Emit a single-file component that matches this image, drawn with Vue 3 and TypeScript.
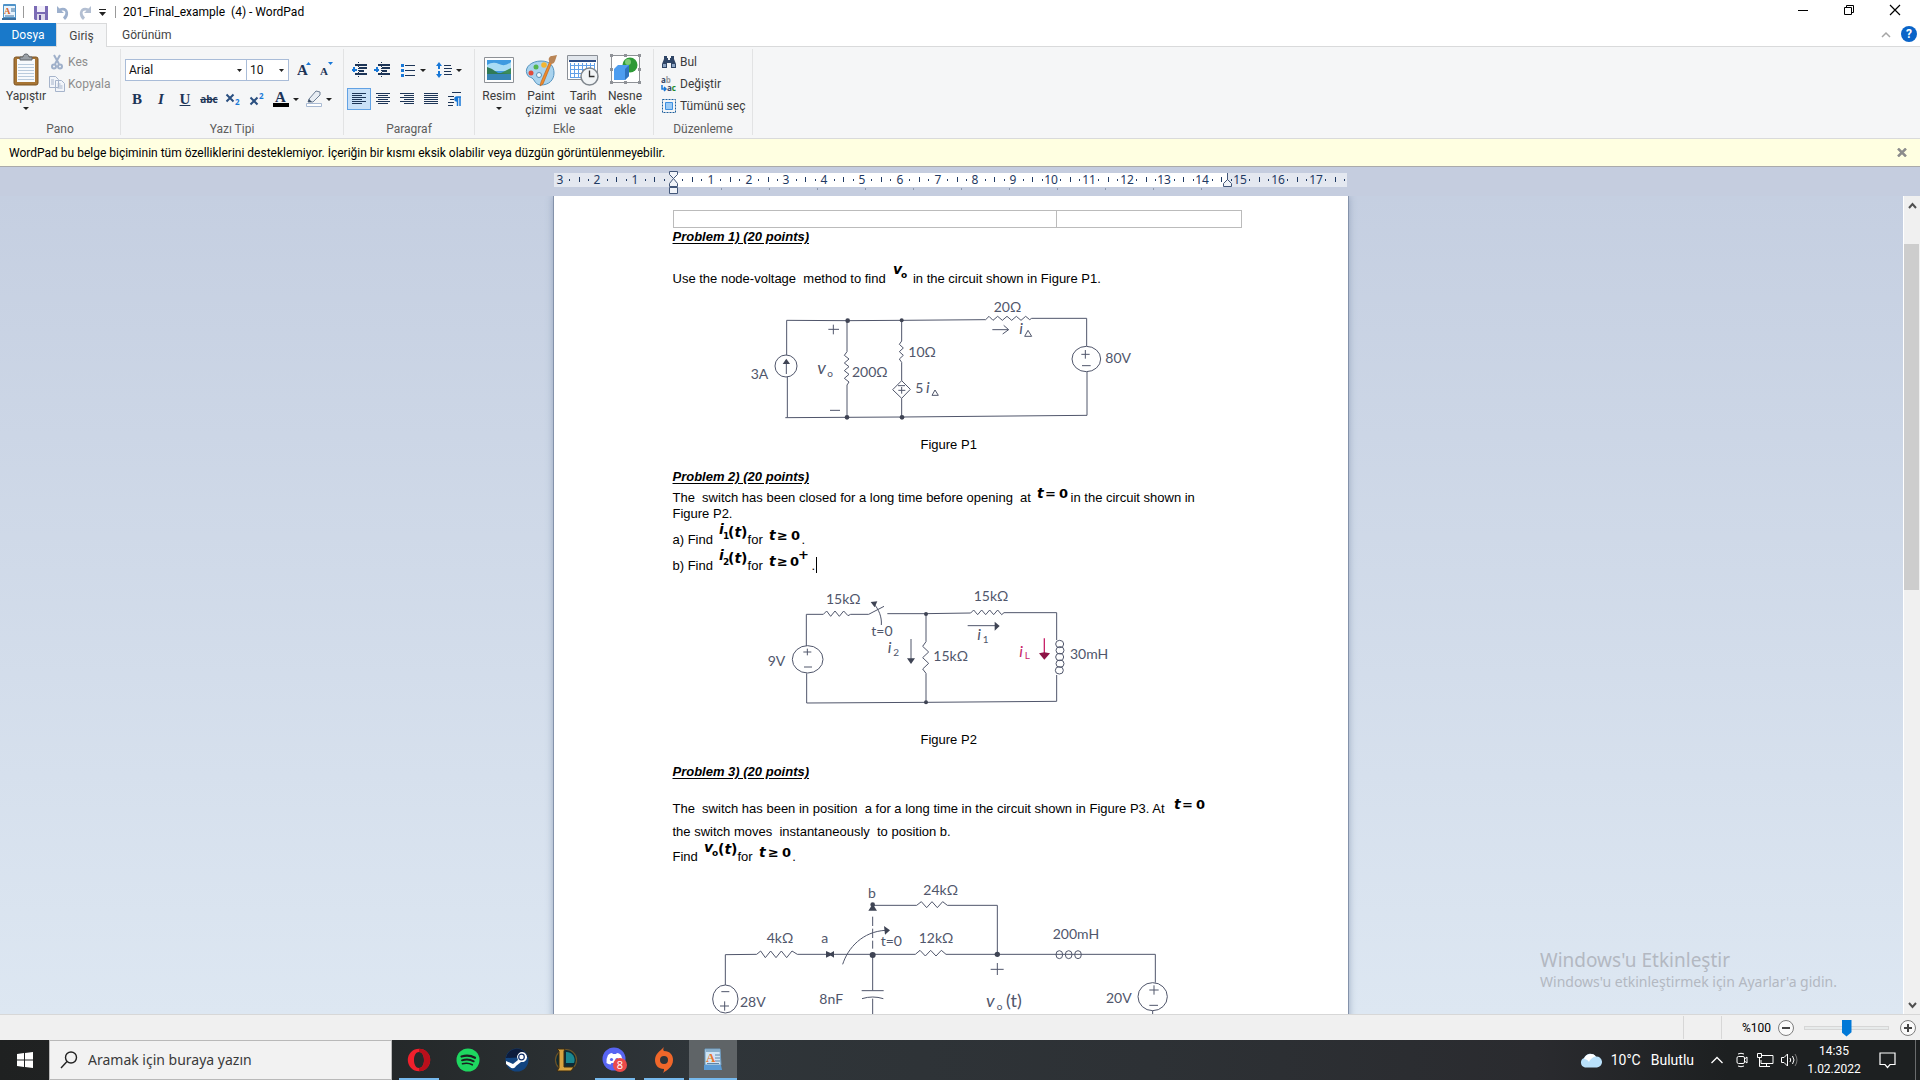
<script setup lang="ts">
import { ref } from 'vue'

const CM = 37.8
const ORIGIN = 119

interface Mark { x: number; label?: string; kind: 'num' | 'dot' | 'line' }
const marks: Mark[] = []
for (let q = -12; q <= 71; q++) {
  if (q === 0) continue
  const x = Math.round(ORIGIN + (q * CM) / 4)
  if (q % 4 === 0) marks.push({ x, label: String(Math.abs(q / 4)), kind: 'num' })
  else marks.push({ x, kind: q % 2 === 0 ? 'line' : 'dot' })
}
const tabStops = Array.from({ length: 11 }, (_, i) => ORIGIN + 48 * (i + 1))

const zoom = ref(50)
const font = ref('Arial')
const size = ref('10')
const search = ref('')
</script>

<template>
  <div class="app">
    <header class="titlebar">
      <svg class="ico" width="16" height="18" viewBox="0 0 16 18"><rect x="2" y="1" width="13" height="15" rx="1" fill="#4f93c9" /><rect x="3" y="3" width="11" height="11" fill="#e9f4fc" /><path d="M1 15h14v2H1z" fill="#3b6f9e" /><text x="3" y="11" class="wp-a">A</text><path d="M10 6h4M10 8h4M4 13h9" stroke="#3b6f9e" /></svg>
      <i class="tsep s1"></i>
      <button class="qb" aria-label="Kaydet"><svg width="16" height="16" viewBox="0 0 16 16"><path d="M1 1h14v14H2l-1-1z" fill="#7b6bb5" /><path d="M4 1h8v6H4z" fill="#f1eefa" /><path d="M4 9h8v6H4z" fill="#dcd8ea" /><path d="M6 10h2v5H6z" fill="#5d4e99" /></svg></button>
      <button class="qb" aria-label="Geri al"><svg width="16" height="16" viewBox="0 0 16 16"><path d="M2 1v7h7L6.500 5.800C10 4.500 12.500 8 8 12.500l2 2.500C16 10 13 0 4.500 3.500z" fill="#9db0cd" /></svg></button>
      <button class="qb" aria-label="Yinele"><svg width="16" height="16" viewBox="0 0 16 16"><path d="M14 1v7H7l2.500-2.200C6 4.500 3.500 8 8 12.500L6 15C0 10 3 0 11.500 3.500z" fill="#b3bfd2" /></svg></button>
      <button class="qb more" aria-label="Araç çubuğunu özelleştir"><svg width="8" height="8" viewBox="0 0 8 8"><path d="M0 0h7v1H0zM0 3h7L3.500 7z" fill="#222" /></svg></button>
      <i class="tsep s2"></i>
      <span class="title">201_Final_example&nbsp; (4) - WordPad</span>
      <div class="winbtns">
        <button aria-label="Simge durumuna küçült"><svg width="12" height="12"><path d="M1 6.500h10" stroke="#000" /></svg></button>
        <button aria-label="Geri yükle"><svg width="12" height="12" fill="none" stroke="#000"><path d="M1.500 3.500h7v7h-7zM3.500 3V1.500h7v7H9" /></svg></button>
        <button aria-label="Kapat"><svg width="12" height="12"><path d="M1 1l10 10M11 1L1 11" stroke="#000" stroke-width="1.200" /></svg></button>
      </div>
    </header>

    <nav class="tabs">
      <button class="tab file">Dosya</button>
      <button class="tab on">Giriş</button>
      <button class="tab view">Görünüm</button>
      <span class="grow"></span>
      <button class="tiny" aria-label="Şeridi küçült"><svg width="10" height="8"><path d="M1 6l4-4 4 4" fill="none" stroke="#a5a5a5" stroke-width="1.500" /></svg></button>
      <button class="tiny help" aria-label="Yardım">?</button>
    </nav>

    <section class="ribbon">
      <div class="group pano">
        <div class="body">
          <button class="big paste">
            <svg width="28" height="34" viewBox="0 0 28 34"><rect x="2" y="4" width="24" height="28" rx="2" fill="#a87534" stroke="#7d5422" /><path d="M5 6h18v23H5z" fill="#f7fafc" /><path d="M6 11.500h16M6 14.500h16M6 17.500h16M6 20.500h16M6 23.500h16M6 26.500h16" stroke="#b9cbdc" /><path d="M8 7V4h3c0-4 6-4 6 0h3v3z" fill="#9aa0a6" stroke="#5f656b" /></svg>
            <span>Yapıştır</span>
            <i class="caret"></i>
          </button>
          <div class="stack dim">
            <button><svg width="16" height="16" viewBox="0 0 16 16" fill="none" stroke="#9fb0ca" stroke-width="2"><path d="M5 1l5 9M11 1L6 10" /><circle cx="5" cy="12.500" r="2" /><circle cx="11" cy="12.500" r="2" /></svg><span>Kes</span></button>
            <button><svg width="16" height="16" viewBox="0 0 16 16" fill="#f2f5fa" stroke="#a6b4cb"><path d="M.5.5h6l3 3v8h-9zM6.500 4.500h6l3 3v8h-9z" /><path d="M2 4h3M2 6h3M2 8h3M8.500 8h3M8.500 10h5M8.500 12h5" /></svg><span>Kopyala</span></button>
          </div>
        </div>
        <div class="glabel">Pano</div>
      </div>

      <div class="group yazi">
        <div class="body rows">
          <div class="row">
            <select v-model="font" class="sel fontsel" aria-label="Yazı tipi"><option>Arial</option></select>
            <select v-model="size" class="sel sizesel" aria-label="Yazı tipi boyutu"><option>10</option></select>
            <button class="ib grow-a" aria-label="Büyüt"><svg width="16" height="20"><text x="0" y="15" class="glyph">A</text><path d="M9 5l2.500-3L14 5z" fill="#1878d8" /></svg></button>
            <button class="ib" aria-label="Küçült"><svg width="16" height="20"><text x="1" y="15" class="glyph sm">A</text><path d="M9 2h5l-2.500 3z" fill="#1878d8" /></svg></button>
          </div>
          <div class="row">
            <button class="ib" aria-label="Kalın"><b class="g">B</b></button>
            <button class="ib" aria-label="İtalik"><b class="g it">I</b></button>
            <button class="ib" aria-label="Altı çizili"><b class="g un">U</b></button>
            <button class="ib" aria-label="Üstü çizili"><b class="g st">abc</b></button>
            <button class="ib" aria-label="Alt simge"><svg width="16" height="18"><path d="M1.500 4.500l7 7M8.500 4.500l-7 7" stroke="#2a4f80" stroke-width="2" /><text x="10" y="15" class="num">2</text></svg></button>
            <button class="ib" aria-label="Üst simge"><svg width="16" height="18"><path d="M1.500 7.500l7 7M8.500 7.500l-7 7" stroke="#2a4f80" stroke-width="2" /><text x="10" y="9" class="num">2</text></svg></button>
            <button class="ib split" aria-label="Metin rengi"><svg width="16" height="18"><text x="2" y="12" class="glyph">A</text><path d="M0 13h16v4H0z" fill="#000" /></svg><i class="caret"></i></button>
            <button class="ib split" aria-label="Vurgu rengi"><svg width="16" height="18"><path d="M3 9l7-8 4 1v3l-7 7H2z" fill="#e8edf3" stroke="#6e7f95" /><path d="M2 12l1-3 3 3z" fill="#3d4f67" /><path d="M.5 13.500h15v3H.5z" fill="#fff" stroke="#a9bad3" /></svg><i class="caret"></i></button>
          </div>
        </div>
        <div class="glabel">Yazı Tipi</div>
      </div>

      <div class="group para">
        <div class="body rows">
          <div class="row">
            <button class="ib" aria-label="Girintiyi azalt"><svg width="16" height="16" stroke="#1d3557" stroke-width="2" class="cr"><path d="M4 3h12M8 6h8M8 9h5M4 12h12" /><path d="M7.500 0v16" stroke-width="1" stroke-dasharray="1 1" /><path d="M1 7.500h5M3 5v5" stroke="#1878d8" /></svg></button>
            <button class="ib n22" aria-label="Girintiyi artır"><svg width="16" height="16" stroke="#1d3557" stroke-width="2" class="cr"><path d="M4 3h12M8 6h8M8 9h5M4 12h12" /><path d="M7.500 0v16" stroke-width="1" stroke-dasharray="1 1" /><path d="M0 7.500h5M3 5v5" stroke="#1878d8" /></svg></button>
            <button class="ib split lst" aria-label="Liste"><svg width="16" height="16" class="cr"><path d="M5 3.500h10M5 8.500h10M5 13.500h10" stroke="#1d3557" /><path d="M1 2h3v3H1zM1 7h3v3H1zM1 12h3v3H1z" fill="#1878d8" /></svg><i class="caret"></i></button>
            <button class="ib split spc" aria-label="Satır aralığı"><svg width="16" height="16"><path d="M8 3.500h7M8 6.500h8M8 9.500h7M8 12.500h8" stroke="#1d3557" /><path d="M3 0l3 4H4v3H2V4H0zM3 16l3-4H4V9H2v3H0z" fill="#1878d8" /></svg><i class="caret"></i></button>
          </div>
          <div class="row">
            <button class="ib sel-on" aria-label="Sola hizala"><svg width="14" height="12" stroke="#1d3557"><path d="M0 .5h14M0 2.500h10M0 4.500h14M0 6.500h10M0 8.500h14M0 10.500h10" /></svg></button>
            <button class="ib" aria-label="Ortala"><svg width="14" height="12" stroke="#1d3557"><path d="M0 .5h14M2 2.500h10M0 4.500h14M2 6.500h10M0 8.500h14M2 10.500h10" /></svg></button>
            <button class="ib" aria-label="Sağa hizala"><svg width="14" height="12" stroke="#1d3557"><path d="M0 .5h14M4 2.500h10M0 4.500h14M4 6.500h10M0 8.500h14M4 10.500h10" /></svg></button>
            <button class="ib" aria-label="İki yana yasla"><svg width="14" height="12" stroke="#1d3557"><path d="M0 .5h14M0 2.500h14M0 4.500h14M0 6.500h14M0 8.500h14M0 10.500h14" /></svg></button>
            <button class="ib" aria-label="Paragraf"><svg width="14" height="14" stroke="#1d3557"><path d="M4 .5h9M0 4.500h6M2 7.500h4M0 10.500h6M0 13.500h5" /><path d="M13 5H9a2 2 0 0 0 0 4V5zM9.500 5v9M12 5v9" stroke="#1878d8" stroke-width="1.500" fill="#1878d8" /></svg></button>
          </div>
        </div>
        <div class="glabel">Paragraf</div>
      </div>

      <div class="group ekle">
        <div class="body">
          <button class="big">
            <svg width="32" height="34" viewBox="0 0 32 34"><path d="M1.500 4.500h29v25h-29z" fill="#fdfdfd" stroke="#8d9196" /><path d="M4 7h24v20H4z" fill="#3f9ae0" /><path d="M4 12q6-4 12-1t12-2v9H4z" fill="#a9dcf5" /><path d="M4 14l5 2 6 4h13v2H4z" fill="#2f7a56" /><path d="M4 21h24v6H4z" fill="#3785b5" /><path d="M18 20l10-5v6z" fill="#3c8c5a" /></svg>
            <span>Resim</span>
            <i class="caret"></i>
          </button>
          <button class="big">
            <svg width="34" height="34" viewBox="0 0 34 34"><path d="M3 21C0 14 8 8 17 8s13 5 13 12-5 12-13 12c-6 0-6-5-9-7-2-1-4-1-5-4z" fill="#a9d3ee" stroke="#5493bf" /><circle cx="7" cy="20" r="2.500" fill="#e14b3b" /><circle cx="12" cy="14" r="2.500" fill="#53b54e" /><circle cx="20" cy="12" r="2.800" fill="#f2b632" /><circle cx="15" cy="22" r="2.500" fill="#f4f8fb" stroke="#5a90b4" /><path d="M28 9l-9 22-3 2 1-4 9-21z" fill="#f08a2c" stroke="#b45e13" stroke-width=".6" /><path d="M25 8c-1-3 1-5 3-5l5-1-2 6c-1 3-4 4-6 0z" fill="#b98556" /></svg>
            <span>Paint<br />çizimi</span>
          </button>
          <button class="big">
            <svg width="34" height="34" viewBox="0 0 34 34"><path d="M1.500 2.500h30v24h-30z" fill="#fff" stroke="#8a8f96" /><path d="M2 3h29v4H2z" fill="#e1e6ec" /><path d="M3 7h27v2H3z" fill="#2c4d86" /><path d="M4.500 10v14M8.500 10v14M12.500 10v14M16.500 10v14M20.500 10v14M24.500 10v14M28.500 10v14M4 12.500h25M4 16.500h25M4 20.500h25M4 24.500h25" stroke="#62a0e8" /><circle cx="23.500" cy="23.500" r="8.500" fill="#f1f4f6" stroke="#7f868d" stroke-width="1.500" /><path d="M23.500 17.500v6h5" fill="none" stroke="#333" stroke-width="1.300" /></svg>
            <span>Tarih<br />ve saat</span>
          </button>
          <button class="big">
            <svg width="32" height="34" viewBox="0 0 32 34"><path d="M2.500 2.500h28v27h-28z" fill="#fff" stroke="#8f9297" /><circle cx="21" cy="12" r="7.500" fill="#2f9a37" /><circle cx="19" cy="9" r="3" fill="#7dcc76" /><path d="M5 16l4-4h11v11l-4 4H5z" fill="#4d9df0" /><path d="M16 16l4-4v11l-4 4z" fill="#2f74c0" /><path d="M1 1h3v3H1zM15 1h3v3h-3zM29 1h3v3h-3zM1 15h3v3H1zM29 15h3v3h-3zM1 28h3v3H1zM15 28h3v3h-3zM29 28h3v3h-3z" fill="#8f9297" /></svg>
            <span>Nesne<br />ekle</span>
          </button>
        </div>
        <div class="glabel">Ekle</div>
      </div>

      <div class="group duz">
        <div class="body">
          <div class="stack">
            <button><svg width="16" height="16" viewBox="0 0 16 16"><path d="M3 2h3v2h1v2h2V4h1V2h3v3l2 5v4h-5v-5H6v5H1v-4l2-5z" fill="#2f4566" /><path d="M2 10h3v3H2zM11 10h3v3h-3z" fill="#8da5c4" /></svg><span>Bul</span></button>
            <button><svg width="16" height="20" viewBox="0 0 16 20"><text x="0" y="9" class="ab">a<tspan fill="#999">b</tspan></text><text x="6" y="17" class="ab">a<tspan fill="#1c8a2c">c</tspan></text><path d="M1 11v4h4M3 13l2 2-2 2" fill="none" stroke="#1878d8" stroke-width="1.500" /></svg><span>Değiştir</span></button>
            <button><svg width="16" height="16" viewBox="0 0 16 16"><path d="M1.500 1.500h13v13h-13z" fill="none" stroke="#1c5e9c" stroke-dasharray="2 1" /><path d="M4.500 4.500h7v7h-7z" fill="#9ccbf6" stroke="#3d8fe0" /></svg><span>Tümünü seç</span></button>
          </div>
        </div>
        <div class="glabel">Düzenleme</div>
      </div>
    </section>

    <div class="notice" role="status">
      <span>WordPad bu belge biçiminin tüm özelliklerini desteklemiyor. İçeriğin bir kısmı eksik olabilir veya düzgün görüntülenmeyebilir.</span>
      <button aria-label="Kapat"><svg width="10" height="9"><path d="M1 .5l8 8M9 .5l-8 8" stroke="#8c8c8c" stroke-width="2.500" /></svg></button>
    </div>

    <div class="rulerband">
      <svg class="ruler" width="794" height="29" viewBox="0 0 794 29">
        <rect y="6" width="793" height="14" fill="#e4e8f0" />
        <rect x="119" y="6" width="555" height="14" fill="#fff" />
        <template v-for="m in marks" :key="m.x">
          <text v-if="m.kind === 'num'" :x="m.x" y="17" class="rnum">{{ m.label }}</text>
          <rect v-else-if="m.kind === 'line'" :x="m.x" y="10" width="1" height="5" fill="#1f3a63" />
          <rect v-else :x="m.x" y="12" width="1" height="2" fill="#1f3a63" />
        </template>
        <rect v-for="t in tabStops" :key="t" :x="t" y="21" width="1" height="2" fill="#8c98ad" />
        <path d="M115.500 4.500h8v3l-4 4 4 5v3h-8v-3l4-5-4-4zM115.500 20.500h8v6h-8z" fill="#f1f4f9" stroke="#44587a" />
        <path d="M673.500 6v7M669.500 19.500v-3l4-4 4 4v3z" fill="#f1f4f9" stroke="#44587a" />
      </svg>
    </div>

    <main class="work">
      <div class="canvas">
        <article class="paper">
          <table class="tbl" aria-label="Üst bilgi"><tbody><tr><td class="c1"></td><td></td></tr></tbody></table>
          <h2 class="h1b">Problem 1) (20 points)</h2>
          <p class="use">Use the node-voltage&nbsp; method to find <svg class="eq" width="20" height="10"><text x="4" y="1" class="mi">v</text><text x="12" y="5" class="sub">o</text></svg> in the circuit shown in Figure P1.</p>
          <svg class="fig f1" width="568" height="146" viewBox="39 30 1704 438">
            <g class="ink">
              <path d="M380 225V121L560 122L725 121L977 119l10-10 12 12 14-12 14 12 14-12 14 12 14-12 14 12 14-12 12 10L1115 115H1280V198M1281 276V406L726 411L376 413M382 290V412M561 122V215l-8 11 14 11-14 12 14 11-14 12 14 11-14 12 14 11-6 9V411M725 122V183l-7 10 12 11-12 11 12 11-12 11 7 10V302l26 26-26 27V411M725 302l-27 27 27 26" />
              <circle cx="378" cy="258" r="33" /><ellipse cx="1279" cy="237" rx="43" ry="38" />
              <path d="M379 282V240M520 134v29M505 148h32M510 391h30M997 149h48M1031 136l15 13-18 13M1276 210v26M1264 223h25M1266 257h26M725 321v20M715 331h21M714 317h21M1094 169l10-18 11 18zM816 346l9-16 10 16z" />
            </g>
            <path d="M379 236l-11 16h22z" class="dot" />
            <circle cx="563" cy="122" r="7" class="dot" /><circle cx="725" cy="121" r="6" class="dot" /><circle cx="561" cy="412" r="7" class="dot" /><circle cx="726" cy="412" r="7" class="dot" />
            <text x="272" y="298">3A</text><text x="472" y="282" class="v">v</text><text x="502" y="291" class="s">o</text><text x="576" y="290">200Ω</text><text x="745" y="230">10Ω</text><text x="766" y="340">5</text><text x="798" y="340" class="i">i</text><text x="1001" y="95">20Ω</text><text x="1078" y="162" class="i">i</text><text x="1336" y="250">80V</text>
          </svg>
          <p class="cap">Figure P1</p>
          <h2 class="h2b">Problem 2) (20 points)</h2>
          <p class="sw">The&nbsp; switch has been closed for a long time before opening&nbsp; at <svg class="eq" width="36" height="10"><text x="2" y="6" class="mi">t</text><text x="10" y="6" class="mr">=</text><text x="24" y="6" class="mr">0</text></svg>in the circuit shown in<br />Figure P2.</p>
          <p class="ab1">a) Find <svg class="eq" width="31" height="10"><text x="2" y="0" class="mi">i</text><text x="6" y="5" class="sub">1</text><text x="11" y="3" class="mi"><tspan class="par">(</tspan>t<tspan class="par">)</tspan></text></svg>for <svg class="eq" width="35" height="10"><text x="3" y="6" class="mi">t</text><text x="11" y="6" class="mr">≥</text><text x="25" y="6" class="mr">0</text></svg>.</p>
          <p class="ab1">b) Find <svg class="eq" width="31" height="10"><text x="2" y="0" class="mi">i</text><text x="6" y="5" class="sub">2</text><text x="11" y="3" class="mi"><tspan class="par">(</tspan>t<tspan class="par">)</tspan></text></svg>for <svg class="eq" width="45" height="10"><text x="3" y="6" class="mi">t</text><text x="11" y="6" class="mr">≥</text><text x="24" y="6" class="mr">0</text><text x="32" y="-1" class="mr">+</text></svg>.<i class="cursor"></i></p>
          <svg class="fig f2" width="568" height="150" viewBox="-201 0 1704 450">
            <g class="ink">
              <path d="M199 198V103H250l10-10 12 16 13-16 13 16 13-16 13 14 8-4H386L432 79M442 101L555 101L692 99l9-9 12 14 12-14 12 14 12-14 12 14 12-14 12 14 7-6L950 98V180M950 285V364L555 367L200 369V280M558 102V185l-10 14 18 17-18 17 18 17-18 17 10 13V367" />
              <ellipse cx="959" cy="192" rx="12" ry="11" /><ellipse cx="960" cy="211" rx="12" ry="11" /><ellipse cx="959" cy="231" rx="12" ry="11" /><ellipse cx="960" cy="251" rx="12" ry="11" /><ellipse cx="958" cy="271" rx="12" ry="11" />
              <ellipse cx="203" cy="238" rx="46" ry="41" />
              <path d="M202 206v20M190 216h24M192 261h24M424 135c2-24-8-48-23-64M513 177v60M683 137h84" />
            </g>
            <path d="M392 66l20-2-8 18zM501 235h24l-12 17zM764 125v27l15-14z" class="dot" /><circle cx="558" cy="102" r="6" class="dot" /><circle cx="558" cy="367" r="6" class="dot" />
            <path d="M913 175v48" stroke="#c8246a" stroke-width="4" /><path d="M897 220l16-3 17 3-17 19z" fill="#8d1446" />
            <text x="83" y="258">9V</text><text x="258" y="72">15kΩ</text><text x="394" y="167">t=0</text><text x="443" y="220" class="i">i</text><text x="460" y="229" class="s">2</text><text x="580" y="242">15kΩ</text><text x="701" y="62">15kΩ</text><text x="712" y="180" class="i">i</text><text x="728" y="188" class="s">1</text><text x="838" y="231" class="i pink">i</text><text x="854" y="238" class="s pink">L</text><text x="990" y="237">30mH</text>
          </svg>
          <p class="cap c2">Figure P2</p>
          <h2 class="h2b">Problem 3) (20 points)</h2>
          <p class="p3">The&nbsp; switch has been in position&nbsp; a for a long time in the circuit shown in Figure P3. At <svg class="eq" width="40" height="10"><text x="6" y="6" class="mi">t</text><text x="14" y="6" class="mr">=</text><text x="28" y="6" class="mr">0</text></svg></p>
          <p class="p3b">the switch moves&nbsp; instantaneously&nbsp; to position b.</p>
          <p class="p3c">Find <svg class="eq" width="36" height="10"><text x="3" y="1" class="mi">v</text><text x="11" y="5" class="sub">o</text><text x="17" y="3" class="mi"><tspan class="par">(</tspan>t<tspan class="par">)</tspan></text></svg>for <svg class="eq" width="36" height="10"><text x="3" y="6" class="mi">t</text><text x="12" y="6" class="mr">≥</text><text x="26" y="6" class="mr">0</text></svg>.</p>
          <svg class="fig f3" width="568" height="156" viewBox="39 342 1704 468">
            <g class="ink">
              <path d="M196 675V584L290 583l12-10 14 20 16-20 16 20 16-20 16 20 16-20 16 10H638M638 583H766l14-12 16 17 16-17 16 17 16-17 14 12H1486V668M1012 583V436H862l-14-11-16 18-16-18-16 18-16-18-14 11H638M638 583V691M638 716V762M605 692h66M606 716q32-10 64 0M548 613c16-50 60-98 128-102M1478 752v10" />
              <ellipse cx="1198" cy="584" rx="10" ry="12" /><ellipse cx="1226" cy="584" rx="10" ry="12" /><ellipse cx="1254" cy="584" rx="10" ry="12" />
              <path d="M638 470v96" stroke-dasharray="28 8" />
              <ellipse cx="196" cy="717" rx="38" ry="42" /><ellipse cx="1478" cy="710" rx="44" ry="42" />
              <path d="M184 695h24M194 724v28M180 738h27M1012 609v36M992 628h39M1482 676v28M1468 690h28M1468 736h26" />
            </g>
            <path d="M625 452l13-20 13 20zM498 573l22 10-22 10zM522 573v20l-16-10zM672 498l18 13-15 13z" class="dot" /><circle cx="638" cy="434" r="7" class="dot" /><circle cx="638" cy="585" r="9" class="dot" /><circle cx="1012" cy="583" r="8" class="dot" />
            <text x="320" y="549">4kΩ</text><text x="484" y="550">a</text><text x="624" y="415">b</text><text x="662" y="557">t=0</text><text x="790" y="404">24kΩ</text><text x="776" y="548">12kΩ</text><text x="1178" y="537">200mH</text><text x="240" y="740">28V</text><text x="478" y="732">8nF</text><text x="978" y="742" class="v">v</text><text x="1010" y="750" class="s">o</text><text x="1038" y="742" class="v up-r">(t)</text><text x="1338" y="730">20V</text>
          </svg>
        </article>
        <div class="watermark"><div class="w1">Windows'u Etkinleştir</div><div class="w2">Windows'u etkinleştirmek için Ayarlar'a gidin.</div></div>
      </div>
      <div class="scroll">
        <button aria-label="Yukarı"><svg width="9" height="7"><path d="M1 6l3.500-4L8 6" fill="none" stroke="#505050" stroke-width="2" /></svg></button>
        <div class="track"><div class="thumb"></div></div>
        <button aria-label="Aşağı"><svg width="9" height="7"><path d="M1 1l3.500 4L8 1" fill="none" stroke="#505050" stroke-width="2" /></svg></button>
      </div>
    </main>

    <footer class="status">
      <span class="cell"></span>
      <div class="zoomer">
        <label for="zoom">%100</label>
        <button class="zb" aria-label="Uzaklaştır"><svg width="16" height="16"><circle cx="8" cy="8" r="7.500" fill="#fafafa" stroke="#7e7e7e" /><path d="M4 8h8" stroke="#444" stroke-width="2" /></svg></button>
        <input id="zoom" v-model="zoom" type="range" min="0" max="100" />
        <button class="zb" aria-label="Yakınlaştır"><svg width="16" height="16"><circle cx="8" cy="8" r="7.500" fill="#fafafa" stroke="#7e7e7e" /><path d="M4 8h8M8 4v8" stroke="#444" stroke-width="2" /></svg></button>
      </div>
    </footer>

    <div class="taskbar">
      <button class="start" aria-label="Başlat"><svg width="16" height="16" fill="#fff"><path d="M0 2l7-1v6.500H0zM8 1l8-1v7.500H8zM0 8.500h7V15l-7-1zM8 8.500h8V16l-8-1z" /></svg></button>
      <label class="search">
        <svg width="18" height="18" fill="none" stroke="#222" stroke-width="1.400"><circle cx="11" cy="6.500" r="5.500" /><path d="M7 10.500L1 17" /></svg>
        <input v-model="search" type="text" placeholder="Aramak için buraya yazın" aria-label="Ara" />
      </label>
      <div class="apps">
        <button class="run" aria-label="Opera"><svg width="24" height="24" viewBox="0 0 24 24"><path fill-rule="evenodd" d="M12 .8a11.200 11.200 0 1 0 0 22.400 11.200 11.200 0 0 0 0-22.400zM12 4c3 0 5 3.500 5 8s-2 8-5 8-5-3.500-5-8 2-8 5-8z" fill="#f0202c" /><path d="M12 .8a11.200 11.200 0 0 1 0 22.400v-3.200c3 0 5-3.500 5-8s-2-8-5-8z" fill="#b90f1b" /></svg></button>
        <button aria-label="Spotify"><svg width="24" height="24" viewBox="0 0 24 24" fill="none" stroke="#1b1f20" stroke-linecap="round"><circle cx="12" cy="12" r="11.500" fill="#1ed760" stroke="none" /><path d="M5.500 8.500c5-1.500 9.500-1 13.500 1.300" stroke-width="2.200" /><path d="M6 12.300c4.500-1.300 8.500-.8 11.700 1" stroke-width="1.900" /><path d="M6.500 15.800c4-1 7-.6 9.800 1" stroke-width="1.600" /></svg></button>
        <button aria-label="Steam"><svg width="24" height="24" viewBox="0 0 24 24"><circle cx="12" cy="12" r="11.500" fill="#12447f" /><path d="M.7 10A11.500 11.500 0 0 1 23 9z" fill="#0d1c3c" /><path d="M1 13l7 3 5-4-1-3a5 5 0 1 1 4 5l-5 4a3.500 3.500 0 0 1-6 1L1 16z" fill="#fff" /><circle cx="16.500" cy="9" r="2.800" fill="#fff" stroke="#12306a" stroke-width="1.200" /></svg></button>
        <button aria-label="League of Legends"><svg width="24" height="24" viewBox="0 0 24 24"><circle cx="12" cy="12" r="10.500" fill="#0d2b36" stroke="#6e5426" stroke-width="1.200" /><path d="M12 4a8 8 0 0 1 8 11H12z" fill="#1a8790" /><path d="M3 1h8l-1 2v16h10l-3 4H3l2-3V3z" fill="#d7a441" stroke="#3b2a10" /></svg></button>
        <button class="run" aria-label="Discord"><svg width="26" height="26" viewBox="0 0 26 26"><circle cx="12" cy="12" r="11.500" fill="#5865f2" /><path d="M6 8q2-2 4-2l1 1h3l1-1q2 0 4 2 2 4 1.500 8-2 2-4 1.500l-1-1.500H9.500l-1 1.500Q6 17 4.500 16 4 12 6 8z" fill="#fff" /><circle cx="9.500" cy="12.500" r="1.600" fill="#5865f2" /><circle cx="15" cy="12.500" r="1.600" fill="#5865f2" /><circle cx="18" cy="18" r="7" fill="#ec4a4a" /><text x="18" y="22" class="badge">8</text></svg></button>
        <button class="run" aria-label="Origin"><svg width="24" height="26" viewBox="0 0 24 26"><path fill-rule="evenodd" d="M12 0c-1 2-1 3 0 4 6 0 9 4 9 9 0 7-6 10-10 13 1-2 1-3 1-4-6 0-9-4-9-9C3 7 8 4 12 0zM12 9a4 4 0 1 0 0 8 4 4 0 0 0 0-8z" fill="#f0672a" /></svg></button>
        <button class="run active" aria-label="WordPad"><svg width="20" height="24" viewBox="0 0 20 24"><path d="M2 1h15l1 16H2z" fill="#cfe4f5" stroke="#6d9dc4" /><path d="M3 1h14v3H3z" fill="#87aecb" /><path d="M1 17h17l1 5H1z" fill="#5b9bd5" /><path d="M12 7h5M12 10h5M12 13h5M4 15.500h12" stroke="#5f86a8" /><text x="3" y="14" class="wp-b">A</text></svg></button>
      </div>
      <div class="tray">
        <svg width="22" height="16" viewBox="0 0 22 16"><path d="M5 15.500a5 5 0 0 1-1-9.500A7 7 0 0 1 16 4.500a5.500 5.500 0 0 1 1 11z" fill="#b9e1fb" /><path d="M4 7A7 7 0 0 1 16 4.500C12 5 10 8 9 10 7 7 5 7 4 7z" fill="#fff" /></svg>
        <span class="temp">10°C</span><span class="wx">Bulutlu</span>
        <svg class="up" width="12" height="8" fill="none" stroke="#fff" stroke-width="1.300"><path d="M.5 7L6 1.500 11.500 7" /></svg>
        <svg class="cam" width="12" height="16" fill="none" stroke="#fff"><rect x="1" y="4.500" width="7.500" height="7" rx="1.500" /><path d="M8.500 7l2.500-2v6l-2.500-2M2 2q3-1.500 6 0M2 14q3 1.500 6 0" /></svg>
        <svg class="net" width="17" height="15" fill="none" stroke="#fff"><path d="M5 2.500h11v8H4V7M6 13.500h7M9.500 10.500v3M.5.5h4v4h-4zM2.500 4.500v9H6" /></svg>
        <svg class="snd" width="17" height="14" fill="none" stroke="#fff"><path d="M.5 4.500H3l3.500-3.500v12L3 9.500H.5zM9 5q1.500 2 0 4M11.500 3q3 4 0 8" /><path d="M14 1q4 6 0 12" stroke="#777" /></svg>
        <div class="clock"><span>14:35</span><span>1.02.2022</span></div>
        <svg class="msg" width="17" height="17" fill="none" stroke="#fff" stroke-width="1.200"><path d="M1 1h15v11.500h-5l-2.500 3-2.500-3H1z" /></svg>
        <i class="peek"></i>
      </div>
    </div>
  </div>
</template>

<style>
body { margin: 0; overflow: hidden; }
</style>

<style scoped>
.app { height: 100vh; display: flex; flex-direction: column; background: #fff; font: 12px/16px Roboto, sans-serif; color: #222; }
button { border: 0; background: none; padding: 0; margin: 0; font: inherit; color: inherit; display: flex; align-items: center; justify-content: center; }
svg { display: block; flex: none; }
.grow { flex: 1; }
.titlebar { height: 23px; flex: none; display: flex; align-items: center; color: #000; }
.ico { margin-left: 1px; }
.wp-a { font: bold 9px "Liberation Serif", serif; fill: #d8642a; }
.tsep { width: 1px; height: 12px; background: #999; }
.s1 { margin: 0 8px 0 6px; }
.s2 { margin: 0 7px 0 8px; }
.qb { width: 22px; height: 22px; margin-top: 2px; }
.qb:first-of-type { margin-left: -2px; }
.more { width: 8px; margin-left: 3px; }
.title { white-space: pre; }
.winbtns { margin-left: auto; display: flex; padding-right: 2px; margin-top: -3px; }
.winbtns button { width: 46px; height: 20px; }
.tabs { height: 24px; flex: none; display: flex; border-bottom: 1px solid #d9dadb; box-sizing: border-box; }
.tab { height: 23px; color: #444; }
.file { width: 56px; background: #1979ca; color: #fff; }
.on { width: 51px; height: 24px; background: #f5f6f7; border: 1px solid #d9dadb; border-bottom: 0; }
.view { padding: 0 15px; }
.tiny { width: 20px; }
.help { width: 16px; height: 16px; border-radius: 8px; background: #0a64c8; color: #fff; font-weight: bold; margin: 3px 3px 0 5px; }
.ribbon { height: 91px; flex: none; display: flex; background: #f5f6f7; border-bottom: 1px solid #d9dadb; }
.group { display: flex; flex-direction: column; border-right: 1px solid #e2e3e4; margin: 2px 0 3px; box-sizing: border-box; }
.body { flex: 1; display: flex; }
.glabel { text-align: center; color: #5d5d5d; height: 16px; margin-bottom: -2px; }
.pano { width: 121px; }
.yazi { width: 223px; }
.para { width: 131px; }
.ekle { width: 179px; }
.duz { width: 99px; }
.rows { flex-direction: column; gap: 7px; padding: 10px 0 0 4px; }
.para .rows { padding-left: 3px; }
.row { display: flex; align-items: center; height: 22px; }
.big { width: 42px; flex-direction: column; justify-content: flex-start; padding-top: 4px; line-height: 14px; color: #3b3b3b; white-space: nowrap; }
.big span { margin-top: 2px; }
.ekle .body { padding-left: 3px; }
.paste { width: 46px; margin-left: 3px; }
.caret { width: 0; height: 0; border: 3px solid transparent; border-top-color: #222; border-bottom: 0; }
.big .caret { margin-top: 4px; }
.stack { display: flex; flex-direction: column; padding-top: 2px; color: #3b3b3b; }
.stack button { height: 22px; gap: 3px; justify-content: flex-start; white-space: nowrap; }
.duz .stack { padding-left: 7px; }
.dim { color: #8d8d8d; }
.sel { appearance: none; height: 22px; border: 1px solid #a9bcd8; border-radius: 0; background: #fff url("data:image/svg+xml,%3Csvg xmlns='http://www.w3.org/2000/svg' width='5' height='3'%3E%3Cpath d='M0 0h5L2.500 3z' fill='%23222'/%3E%3C/svg%3E") no-repeat right 4px center; font: inherit; color: #111; padding: 0 3px; box-sizing: border-box; }
.fontsel { width: 122px; }
.sizesel { width: 43px; margin-left: -1px; }
.ib { width: 24px; height: 22px; flex: none; box-sizing: border-box; }
.grow-a { width: 22px; margin-left: 5px; }
.grow-a + .ib, .n22 { width: 22px; }
.split { width: 33px; gap: 4px; }
.lst { margin-left: 3px; }
.spc { margin-left: 3px; }
.sel-on { background: #c9e0f7; border: 1px solid #62a2e4; }
.g { font: bold 15px/20px "Liberation Serif", serif; color: #1d3557; }
.it { font-style: italic; }
.un { text-decoration: underline; }
.st { font: bold 10px/20px "Open Sans", sans-serif; text-decoration: line-through; }
.glyph { font: bold 15px "Liberation Serif", serif; fill: #1d3557; }
.sm { font-size: 11px; }
.num { font: bold 8px "Open Sans", sans-serif; fill: #1878d8; }
.ab { font: bold 8px "Open Sans", sans-serif; fill: #2f4566; }
.cr { shape-rendering: crispEdges; }
.notice { height: 27px; flex: none; display: flex; align-items: center; justify-content: space-between; background: #ffffe1; border-bottom: 1px solid #aaa; padding: 0 13px 0 9px; color: #000; }
.rulerband { height: 29px; flex: none; display: flex; justify-content: center; padding-right: 19px; background: #c5cddf; }
.rnum { font: 12px "Noto Sans", sans-serif; fill: #1f3a63; text-anchor: middle; }
.work { flex: 1; min-height: 0; display: flex; }
.canvas { flex: 1; min-width: 0; overflow: hidden; position: relative; display: flex; justify-content: center; align-items: flex-start; padding-right: 2px; background: linear-gradient(#c5cfe1, #dde7f2); }
.paper { width: 794px; box-sizing: border-box; padding: 14px 0 40px 119px; background: #fff; box-shadow: -1px 0 #8492aa, 1px 0 #8492aa, 0 0 8px #8a9ab5; color: #000; font: 13px/16px "Liberation Sans", sans-serif; }
.tbl { border-collapse: collapse; width: 569px; height: 18px; }
.tbl td { border: 1px solid #bbb; padding: 0; height: 16px; }
.c1 { width: 382px; }
h2 { font-size: 13px; font-style: italic; font-weight: bold; margin: 0; text-decoration: underline; text-underline-offset: 2px; }
p { margin: 0; white-space: nowrap; }
.eq { display: inline-block; overflow: visible; vertical-align: baseline; }
.mi { font: italic bold 14px "DejaVu Sans", sans-serif; }
.mr { font: bold 13px "DejaVu Sans", sans-serif; }
.sub { font: bold 9px "DejaVu Sans", sans-serif; }
.par { font-style: normal; }
.h1b { margin-top: 1px; }
.use { margin-top: 26px; }
.fig { overflow: hidden; }
.f1 { margin-top: 3px; }
.fig text { font: 42px Lato, sans-serif; fill: #50566b; }
.fig .i { font-style: italic; font-size: 48px; }
.fig .v { font-style: italic; font-size: 54px; }
.fig .up-r { font-style: normal; }
.fig .s { font-size: 30px; }
.fig .pink { fill: #c8246a; }
.ink { fill: none; stroke: #50566b; stroke-width: 3; }
.dot { fill: #3f4454; }
.cap { margin-left: 248px; margin-top: 1px; }
.h2b { margin-top: 16px; }
.sw { margin-top: 5px; }
.ab1 { margin-top: 10px; }
.cursor { display: inline-block; width: 1px; height: 16px; background: #000; vertical-align: -3px; margin-left: 1px; margin-top: -3px; }
.f2 { margin-top: 6px; }
.c2 { margin-top: 2px; }
.p3 { margin-top: 21px; }
.p3b { margin-top: 7px; }
.p3c { margin-top: 9px; }
.f3 { margin-top: 9px; }
.watermark { position: absolute; right: 65px; bottom: 22px; color: #b3b8c1; width: 298px; white-space: nowrap; font-family: "Noto Sans", sans-serif; }
.w1 { font-size: 19px; line-height: 24px; }
.w2 { font-size: 14px; line-height: 20px; }
.scroll { width: 17px; background: #f0f0f0; display: flex; flex-direction: column; box-sizing: border-box; border-left: 1px solid #fff; }
.scroll button { height: 18px; }
.track { flex: 1; padding-top: 30px; }
.thumb { height: 346px; background: #cdcdcd; margin-right: 1px; }
.status { height: 26px; flex: none; box-sizing: border-box; border-top: 1px solid #d7d7d7; background: #f0f0f0; display: flex; color: #000; }
.cell { width: 37px; border: solid #d7d7d7; border-width: 0 1px; margin: 1px 0 1px auto; }
.zoomer { display: flex; align-items: center; justify-content: flex-end; width: 194px; padding-right: 4px; }
.zb { width: 16px; margin-left: 7px; }
input[type="range"] { appearance: none; width: 85px; height: 20px; margin: 0 4px 0 10px; background: none; }
input[type="range"]::-webkit-slider-runnable-track { height: 4px; background: #e7eaea; border: 1px solid #d6d6d6; box-sizing: border-box; }
input[type="range"]::-webkit-slider-thumb { appearance: none; width: 10px; height: 17px; margin-top: -7px; background: #0078d7; clip-path: polygon(0 0, 100% 0, 100% 75%, 50% 100%, 0 75%); }
.taskbar { height: 40px; flex: none; display: flex; background: linear-gradient(90deg, #1f2121, #242829 20%, #2f3539 36%, #2d3135 60%, #2a2b2f 80%, #1d2021 90%, #1d2021); color: #fff; }
.start { width: 49px; }
.search { width: 343px; box-sizing: border-box; background: #f2f2f2; border: 1px solid #b9b9b9; display: flex; align-items: center; padding-left: 10px; gap: 10px; }
.search input { border: 0; background: none; outline: 0; flex: 1; min-width: 0; font: 14px/20px "Noto Sans", sans-serif; padding: 0; }
.search input::placeholder { color: #3a3a3a; opacity: 1; }
.apps { display: flex; gap: 1px; margin-left: 3px; }
.apps button { width: 48px; height: 40px; box-sizing: border-box; background: no-repeat center bottom / 40px 2px; }
.apps .run { background-image: linear-gradient(#76b9ed, #76b9ed); }
.apps .active { background-size: 48px 2px; background-color: #5f6467; }
.badge { font: 11px "Open Sans", sans-serif; fill: #fff; text-anchor: middle; }
.wp-b { font: bold 13px "Liberation Serif", serif; fill: #e8762c; }
.tray { margin-left: auto; display: flex; align-items: center; }
.temp { font-size: 14px; margin-left: 9px; }
.wx { font-size: 14px; margin-left: 10px; }
.up { margin-left: 17px; }
.cam { margin-left: 13px; }
.net { margin-left: 9px; }
.snd { margin-left: 7px; }
.clock { display: flex; flex-direction: column; align-items: center; width: 72px; line-height: 18px; }
.msg { margin-left: 9px; }
.peek { width: 1px; height: 40px; background: #6a6c6d; margin: 0 4px 0 19px; }
</style>
